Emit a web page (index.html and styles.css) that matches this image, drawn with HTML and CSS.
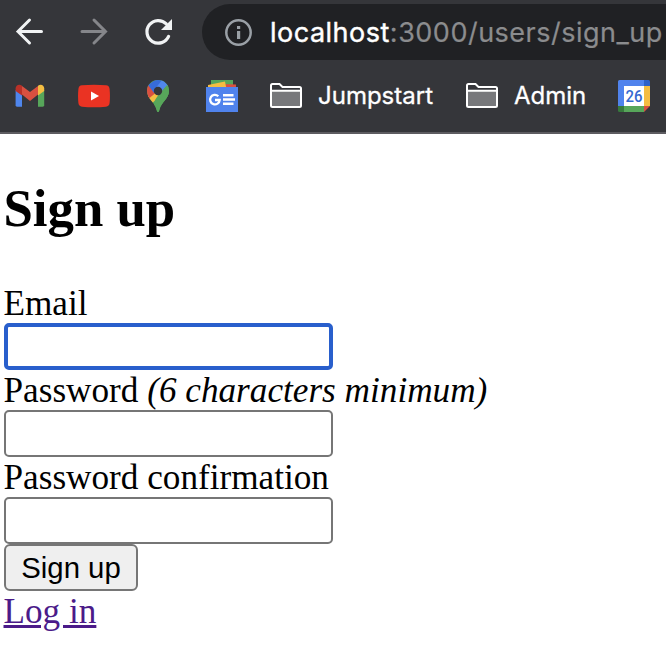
FILE: index.html
```html
<!DOCTYPE html>
<html lang="en">
<head>
<meta charset="utf-8">
<title>Sign up</title>
<link rel="stylesheet" href="styles.css">
</head>
<body>
<header class="browser">
  <div class="toolbar">
    <svg class="nav" viewBox="0 0 32 32"><path d="M27.500 15.500H4M15.500 4L4 15.500L15.500 27" fill="none" stroke="#f1f3f4" stroke-width="3" stroke-linecap="round" stroke-linejoin="miter"/></svg>
    <svg class="nav" viewBox="0 0 32 32"><path d="M4 15.500H27.500M16 4L27.500 15.500L16 27" fill="none" stroke="#85868a" stroke-width="3" stroke-linecap="round"/></svg>
    <svg class="nav" viewBox="0 0 32 32"><path d="M26.600 20.400A11.300 11.300 0 1 1 24.300 7.900" fill="none" stroke="#f1f3f4" stroke-width="3.200" stroke-linecap="round"/><path d="M30 3V14H19Z" fill="#f1f3f4"/></svg>
    <div class="omnibox">
      <svg class="info" viewBox="0 0 28 28"><circle cx="13.500" cy="14.500" r="12.200" fill="none" stroke="#9aa0a6" stroke-width="2.500"/><path d="M12 8h3.200v3h-3.200zM12 13h3.200v8h-3.200z" fill="#9aa0a6"/></svg>
      <span class="url"><span class="host">localhost</span><span class="path">:3000/users/sign_up</span></span>
    </div>
  </div>
  <nav class="bookmarks">
    <svg class="icon" viewBox="0 0 32 32"><path d="M1.600 10L8 14V26.700H3Q1.600 26.700 1.600 25.300Z" fill="#4f86ed"/><path d="M24 14L30.200 10V25.300Q30.200 26.700 28.800 26.700H24Z" fill="#57a65a"/><path d="M1.600 11V8.500C1.600 5 5.500 3.500 8 5.800V15.500L1.600 11Z" fill="#b93128"/><path d="M30.200 11V8.500C30.200 5 26.500 3.500 24 5.800V15.500L30.200 11Z" fill="#f4bd42"/><path d="M8 6L16 12L24 6V14.500L16 21L8 14.500Z" fill="#d95040"/></svg>
    <svg class="icon" viewBox="0 0 32 32"><path d="M4 5.300Q16 4.300 28 5.300Q31.300 5.600 31.600 9Q32.300 16 31.600 23Q31.300 26.400 28 26.700Q16 27.700 4 26.700Q.7 26.400 .4 23Q-.3 16 .4 9Q.7 5.600 4 5.300Z" fill="#ea3323"/><path d="M13 11.500V20.500L21 16Z" fill="#fff"/></svg>
    <svg class="icon" viewBox="0 0 32 32">
      <clipPath id="pin"><path d="M16 0C9.700 0 5 4.700 5 11C5 18.500 12.500 22 14.500 29.500Q15 32 16 32Q17 32 17.500 29.500C19.500 22 27 18.500 27 11C27 4.700 22.300 0 16 0Z"/></clipPath>
      <g clip-path="url(#pin)"><path d="M0 0H32V32H0Z" fill="#57a65a"/><path d="M5 16L17 3L25 10L8 25Z" fill="#f4bd42"/><path d="M2 3L16 11L5 20Z" fill="#d95040"/><path d="M6 5L13 0H20L19 4L12 13Z" fill="#376cd8"/><path d="M20 0H27V7L18 14L13 9Z" fill="#5087ed"/><path d="M26 4L17 14L13 20L10 32H32V4Z" fill="#57a65a"/></g><circle cx="16" cy="11" r="4.200" fill="#35363a"/></svg>
    <svg class="icon" viewBox="0 0 32 32"><path d="M5 0H27V9H5Z" fill="#57a65a"/><path d="M16 4L30 4.500V9H16Z" fill="#d95040"/><path d="M2 5L19 1.500L20.500 9H2Z" fill="#f4bd42"/><path d="M0 7H32V32H0Z" fill="#5083ed"/><path d="M12.300 16.200A4.800 4.800 0 1 0 13.700 20H9" fill="none" stroke="#fff" stroke-width="2.300"/><path d="M17 14H27.500V16.500H17zM17 18.300H29V20.800H17zM17 22.600H27.500V25.100H17z" fill="#fff"/></svg>
    <div class="folder jump"><svg class="icon" viewBox="0 0 32 32"><path d="M2 10H30V26H2Z" fill="#77787b"/><path d="M1 9.500V5.500Q1 4 2.500 4H9.500L12.500 7H29.500Q31 7 31 8.500V25.500Q31 27 29.500 27H2.500Q1 27 1 25.500ZM1 10.800H31" fill="none" stroke="#fff" stroke-width="2"/></svg><span>Jumpstart</span></div>
    <div class="folder admin"><svg class="icon" viewBox="0 0 32 32"><path d="M2 10H30V26H2Z" fill="#77787b"/><path d="M1 9.500V5.500Q1 4 2.500 4H9.500L12.500 7H29.500Q31 7 31 8.500V25.500Q31 27 29.500 27H2.500Q1 27 1 25.500ZM1 10.800H31" fill="none" stroke="#fff" stroke-width="2"/></svg><span>Admin</span></div>
    <svg class="icon" viewBox="0 0 32 32"><path d="M1.500 0H26V6H6V26H0V1.500Q0 0 1.500 0Z" fill="#5083ed"/><path d="M26 0H30.500Q32 0 32 1.500V6H26Z" fill="#2f62c8"/><path d="M26 6H32V26H26Z" fill="#f4bd42"/><path d="M6 26H26V32H6Z" fill="#57a65a"/><path d="M0 26H6V32H1.500Q0 32 0 30.500Z" fill="#37793d"/><path d="M26 26H32L26 32Z" fill="#d95040"/><path d="M6 6H26V26H6Z" fill="#fff"/><text class="date" x="16" y="22" text-anchor="middle" textLength="17" lengthAdjust="spacingAndGlyphs">26</text></svg>
  </nav>
</header>
<main class="page">
  <h2 class="title">Sign up</h2>
  <form class="form">
    <label class="label" for="email">Email</label>
    <input class="field focused" id="email" type="email">
    <label class="label" for="password">Password <em>(6 characters minimum)</em></label>
    <input class="field" id="password" type="password">
    <label class="label" for="confirm">Password confirmation</label>
    <input class="field" id="confirm" type="password">
    <button class="submit" type="button">Sign up</button>
  </form>
  <a class="login" href="#">Log in</a>
</main>
</body>
</html>
```
FILE: styles.css
```css
* { box-sizing: border-box; }
body { margin: 0; background: #fff; color: #000; font-family: "Liberation Serif", serif; font-size: 35.2px; overflow: hidden; }
.browser { height: 134px; background: #35363a; border-bottom: 2px solid #5d5c61; overflow: hidden; font-family: Inter, sans-serif; }
.toolbar { height: 64px; display: flex; align-items: center; padding-left: 14px; gap: 32px; }
.nav { width: 32px; height: 32px; flex: none; }
.omnibox { width: 520px; height: 56px; flex: none; margin-left: -4px; padding-left: 23px; border-radius: 28px; background: #202124; display: flex; align-items: center; gap: 17px; }
.info { width: 28px; height: 28px; flex: none; }
.url { padding-top: 2px; font-size: 27px; line-height: 34px; white-space: nowrap; letter-spacing: 0.5px; }
.host { color: #fff; -webkit-text-stroke: 0.4px #fff; }
.path { color: #8b8c8e; -webkit-text-stroke: 0.2px #8b8c8e; }
.bookmarks { height: 64px; display: flex; align-items: center; padding-left: 14px; gap: 32px; color: #fff; font-size: 24px; -webkit-text-stroke: 0.3px #fff; }
.icon { width: 32px; height: 32px; flex: none; display: block; }
.folder { display: flex; align-items: center; gap: 16px; flex: none; line-height: 30px; white-space: nowrap; }
.jump { width: 164px; }
.admin { width: 120px; }
.date { font: 500 17px Roboto, sans-serif; fill: #3568d0; -webkit-text-stroke: 0; }
.page { padding: 44px 3.5px 0; }
.title { margin: 0; height: 105px; font-size: 52.8px; line-height: 61px; }
.form { display: flex; flex-direction: column; align-items: flex-start; }
.label { height: 40px; line-height: 41px; white-space: nowrap; font-variant-ligatures: common-ligatures; }
.field { width: 329px; height: 47px; margin: 0 0 0 0.5px; padding: 2px 4px; border: 2px solid #767676; border-radius: 5px; background: #fff; outline: none; }
.focused { border: 4px solid #295fcc; }
.submit { width: 134px; height: 47px; margin: 0 0 0 0.5px; padding: 0; border: 2px solid #767676; border-radius: 6px; background: #efefef; color: #000; font: 29.33px "Liberation Sans", sans-serif; }
.login { display: block; width: max-content; line-height: 41px; color: #4b1b89; text-decoration-thickness: 3px; }
```
